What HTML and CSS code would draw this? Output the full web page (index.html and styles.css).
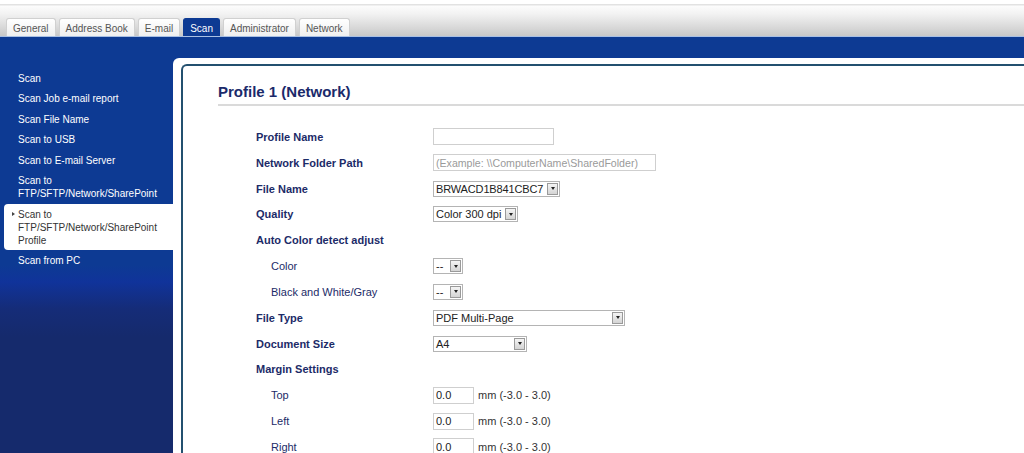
FILE: index.html
```html
<!DOCTYPE html>
<html>
<head>
<meta charset="utf-8">
<link rel="stylesheet" href="styles.css">
</head>
<body>
<div class="topbar">
  <ul class="tabs">
    <li class="tab">General</li>
    <li class="tab">Address Book</li>
    <li class="tab">E-mail</li>
    <li class="tab active">Scan</li>
    <li class="tab">Administrator</li>
    <li class="tab">Network</li>
  </ul>
</div>
<div class="main">
  <ul class="side">
    <li class="item">Scan</li>
    <li class="item">Scan Job e-mail report</li>
    <li class="item">Scan File Name</li>
    <li class="item">Scan to USB</li>
    <li class="item">Scan to E-mail Server</li>
    <li class="item">Scan to<br>FTP/SFTP/Network/SharePoint</li>
    <li class="item sel">Scan to<br>FTP/SFTP/Network/SharePoint<br>Profile</li>
    <li class="item">Scan from PC</li>
  </ul>
  <div class="panel">
    <div class="inner">
      <h1 class="title">Profile 1 (Network)</h1>
      <div class="form">
        <div class="row"><span class="lbl">Profile Name</span><span><input class="txt w-name" type="text"></span></div>
        <div class="row"><span class="lbl">Network Folder Path</span><span><input class="txt w-path" type="text" placeholder="(Example: \\ComputerName\SharedFolder)"></span></div>
        <div class="row"><span class="lbl">File Name</span><span class="sel-box w-file"><span class="val">BRWACD1B841CBC7</span><span class="btn"></span></span></div>
        <div class="row"><span class="lbl">Quality</span><span class="sel-box w-qual"><span class="val">Color 300 dpi</span><span class="btn"></span></span></div>
        <div class="row"><span class="lbl">Auto Color detect adjust</span><span></span></div>
        <div class="row"><span class="lbl sub">Color</span><span class="sel-box w-dash"><span class="val">--</span><span class="btn"></span></span></div>
        <div class="row"><span class="lbl sub">Black and White/Gray</span><span class="sel-box w-dash"><span class="val">--</span><span class="btn"></span></span></div>
        <div class="row"><span class="lbl">File Type</span><span class="sel-box w-type"><span class="val">PDF Multi-Page</span><span class="btn"></span></span></div>
        <div class="row"><span class="lbl">Document Size</span><span class="sel-box w-size"><span class="val">A4</span><span class="btn"></span></span></div>
        <div class="row"><span class="lbl">Margin Settings</span><span></span></div>
        <div class="row"><span class="lbl sub">Top</span><span class="mrg"><input class="txt w-mm" type="text" value="0.0"><span class="unit">mm (-3.0 - 3.0)</span></span></div>
        <div class="row"><span class="lbl sub">Left</span><span class="mrg"><input class="txt w-mm" type="text" value="0.0"><span class="unit">mm (-3.0 - 3.0)</span></span></div>
        <div class="row"><span class="lbl sub">Right</span><span class="mrg"><input class="txt w-mm" type="text" value="0.0"><span class="unit">mm (-3.0 - 3.0)</span></span></div>
      </div>
    </div>
  </div>
</div>
</body>
</html>
```

FILE: styles.css
```css
html, body {
  margin: 0;
  padding: 0;
  height: 453px;
  overflow: hidden;
  background: #fff;
  font-family: "Liberation Sans", Arial, sans-serif;
  font-size: 11px;
}

.topbar {
  height: 36px;
  background: linear-gradient(to bottom, #ffffff 0, #ffffff 4px, #e2e2e2 4px, #e2e2e2 5px, #fcfcfc 6px, #f2f2f2 14px, #c8c8c8 36px);
  border-bottom: 1px solid #a9c0e4;
  display: flex;
  align-items: flex-end;
}

.tabs {
  list-style: none;
  margin: 0 0 0 6px;
  padding: 0;
  display: flex;
  gap: 3px;
  font-size: 10px;
}

.tab {
  height: 17px;
  line-height: 19px;
  padding: 0 6px;
  color: #555;
  border: 1px solid #d0d0d0;
  border-bottom: none;
  border-radius: 3px 3px 0 0;
  background: linear-gradient(to bottom, #ffffff, #efefef);
}

.tab.active {
  background: #0d3a93;
  border-color: #0d3a93;
  color: #fff;
}

.main {
  display: flex;
  height: 416px;
  background: linear-gradient(to bottom, #0d3a93 0, #0d3a93 228px, #10339a 245px, #152c78 272px, #152a6c 300px);
}

.side {
  list-style: none;
  margin: 0;
  padding: 30.75px 0 0 0;
  width: 173px;
  flex: none;
  color: #fff;
  font-size: 10px;
}

.item {
  margin-left: 4px;
  padding: 3.75px 0 3.75px 14px;
  line-height: 13px;
}

.item.sel {
  background: #fff;
  color: #333;
  border-radius: 4px 0 0 4px;
  position: relative;
}

.item.sel::before {
  content: "";
  position: absolute;
  left: 8px;
  top: 8px;
  border-left: 3px solid #444;
  border-top: 2.5px solid transparent;
  border-bottom: 2.5px solid transparent;
}

.panel {
  flex: 1;
  margin-top: 21px;
  background: #fff;
  border-top-left-radius: 6px;
  padding: 6px 0 0 8px;
}

.inner {
  height: 100%;
  border-top: 2px solid #23506f;
  border-left: 2px solid #23506f;
  border-top-left-radius: 6px;
  padding: 0 0 0 35px;
}

.title {
  margin: 16px 0 0 0;
  font-size: 15px;
  font-weight: bold;
  color: #1b2a6b;
  line-height: 20px;
  padding-bottom: 2px;
  border-bottom: 2px solid #dadada;
}

.form {
  margin-top: 18px;
  padding-left: 38px;
}

.row {
  display: grid;
  grid-template-columns: 177px 1fr;
  align-items: center;
  height: 25.83px;
}

.lbl {
  font-weight: bold;
  color: #1c2b68;
}

.lbl.sub {
  font-weight: normal;
  padding-left: 15px;
}

.txt {
  box-sizing: border-box;
  height: 17px;
  margin: 0;
  padding: 0 2px;
  border: 1px solid #cfcfcf;
  font-family: "Liberation Sans", Arial, sans-serif;
  font-size: 11px;
  color: #222;
  outline: none;
  display: block;
}

.txt::placeholder {
  color: #9a9a9a;
  font-size: 10.6px;
}

.w-name { width: 121px; }
.w-path { width: 223px; }
.w-mm { width: 41px; }

.mrg {
  display: flex;
  align-items: center;
}

.unit {
  margin-left: 4px;
  color: #333;
}

.sel-box {
  box-sizing: border-box;
  height: 16px;
  border: 1px solid #b4b4b4;
  display: flex;
  align-items: center;
  justify-content: space-between;
  padding: 0 1px 0 2px;
  color: #222;
  background: #fff;
  white-space: nowrap;
}

.w-file { width: 127px; letter-spacing: -0.15px; }
.w-qual { width: 85px; }
.w-dash { width: 30px; }
.w-type { width: 192px; }
.w-size { width: 94px; }

.btn {
  box-sizing: border-box;
  width: 11px;
  height: 12px;
  margin-left: 2px;
  border: 1px solid #9a9a9a;
  background: linear-gradient(to bottom, #f4f4f4, #d4d4d4);
  display: flex;
  align-items: center;
  justify-content: center;
  flex: none;
}

.btn::after {
  content: "";
  border-top: 3px solid #222;
  border-left: 2.5px solid transparent;
  border-right: 2.5px solid transparent;
}
```
